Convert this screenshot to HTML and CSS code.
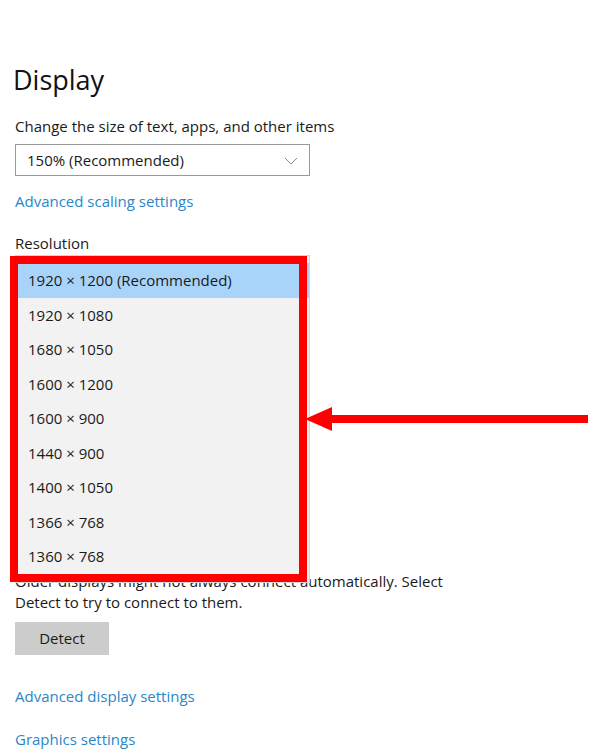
FILE: index.html
```html
<!DOCTYPE html>
<html lang="en">
<head>
  <meta charset="UTF-8">
  <meta name="viewport" content="width=device-width, initial-scale=1.0">
  <title>Display</title>
  <link rel="stylesheet" href="styles.css">
</head>
<body>
  <div class="page">
    <h1 class="title">Display</h1>
    <p class="text">Change the size of text, apps, and other items</p>
    <div class="select">
      <span>150% (Recommended)</span>
      <svg class="chevron" width="14" height="8" viewBox="0 0 14 8">
        <polyline points="1,1 7,7 13,1" fill="none" stroke="#888" stroke-width="1"/>
      </svg>
    </div>
    <a class="link link-first" href="#">Advanced scaling settings</a>
    <p class="label">Resolution</p>

    <div class="res-list">
      <div class="res-item selected">1920 × 1200 (Recommended)</div>
      <div class="res-item">1920 × 1080</div>
      <div class="res-item">1680 × 1050</div>
      <div class="res-item">1600 × 1200</div>
      <div class="res-item">1600 × 900</div>
      <div class="res-item">1440 × 900</div>
      <div class="res-item">1400 × 1050</div>
      <div class="res-item">1366 × 768</div>
      <div class="res-item">1360 × 768</div>

      <div class="highlight"></div>
      <svg class="arrow" width="285" height="28" viewBox="0 0 285 28">
        <polygon points="0,14 27,2 27,26" fill="#ff0000"/>
        <rect x="24" y="10" width="259" height="8" fill="#ff0000"/>
      </svg>
    </div>

    <p class="text">Older displays might not always connect automatically. Select<br>Detect to try to connect to them.</p>
    <button class="btn">Detect</button>
    <a class="link link-display" href="#">Advanced display settings</a>
    <a class="link link-graphics" href="#">Graphics settings</a>
  </div>
</body>
</html>
```

FILE: styles.css
```css
body {
  margin: 0;
  background: #fff;
  color: #1a1a1a;
  font-family: "Open Sans", "Noto Sans", sans-serif;
}

.page {
  padding: 0 15px;
}

.title {
  margin: 60px 0 0 -2px;
  font-size: 27px;
  line-height: 40px;
  font-weight: 400;
  color: #111;
}

.text,
.label {
  margin: 16px 0 0;
  font-size: 15px;
  line-height: 21px;
}

.label {
  margin-top: 21px;
}

.select {
  margin-top: 7px;
  width: 295px;
  height: 32px;
  box-sizing: border-box;
  border: 1px solid #999;
  display: flex;
  align-items: center;
  justify-content: space-between;
  padding: 0 11px 0 11px;
  font-size: 15px;
  line-height: 30px;
}

.chevron {
  margin-top: 2px;
}

.link {
  display: block;
  font-size: 15px;
  line-height: 21px;
  color: #2b86c8;
  text-decoration: none;
}

.link-first {
  margin-top: 15px;
}

/* open resolution dropdown */
.res-list {
  position: relative;
  z-index: 1;
  margin: 1px 0 -12px;
  width: 295px;
  box-sizing: border-box;
  padding: 7px 0 8px;
  background: #f2f2f2;
  border: 1px solid #d4d4d4;
}

.res-item {
  height: 34.5px;
  line-height: 34.5px;
  padding-left: 12px;
  font-size: 15px;
}

.res-item.selected {
  background: #a9d4fa;
}

.highlight {
  position: absolute;
  left: -6px;
  top: 0;
  width: 297px;
  height: 326px;
  box-sizing: border-box;
  border: 8px solid #ff0000;
}

.arrow {
  position: absolute;
  left: 289px;
  top: 149px;
}

.res-list + .text {
  margin-top: 0;
}

.btn {
  display: block;
  margin-top: 9px;
  width: 94px;
  height: 33px;
  border: none;
  background: #cccccc;
  color: #1a1a1a;
  font-family: inherit;
  font-size: 15px;
}

.link-display {
  margin-top: 31px;
}

.link-graphics {
  margin-top: 22px;
}
```
